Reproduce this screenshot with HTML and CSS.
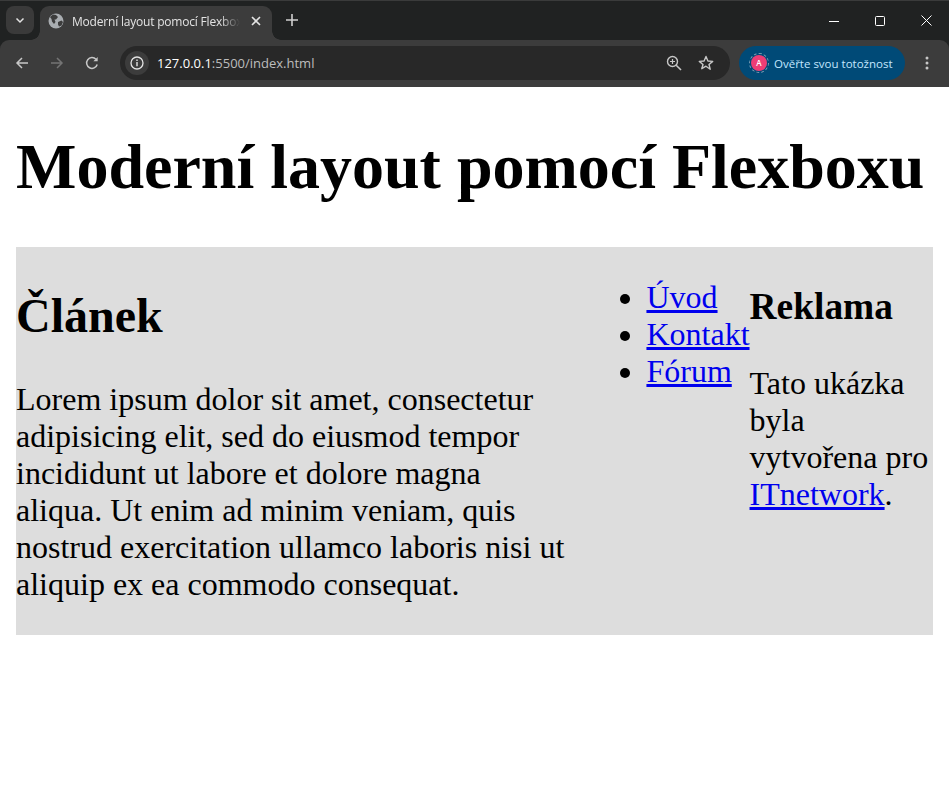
FILE: index.html
```html
<!DOCTYPE html>
<html lang="cs">
<head>
<meta charset="utf-8">
<title>Moderní layout pomocí Flexboxu</title>
<link rel="stylesheet" href="styles.css">
</head>
<body>
<header class="chrome">
  <div class="tabstrip">
    <div class="tab-search">
      <svg class="ico" width="12" height="12" viewBox="0 0 12 12"><path d="M2.500 4.500L6 8l3.500-3.500" fill="none" stroke="#e3e3e3" stroke-width="1.500"/></svg>
    </div>
    <div class="tab">
      <svg class="favicon" width="16" height="16" viewBox="0 0 16 16"><circle cx="8" cy="8" r="7.500" fill="#a9adb1"/><path d="M2 4l3-2.500 3 .5 2 2-2 2.500-1.500 0 1 2.500-1.500 2-2-2.500-.5-2.500zM10 9l3.500-1.500 1.500 1.500-1.500 3.500-2.500 1-1-2z" fill="#3c3c3c"/></svg>
      <span class="tab-title">Moderní layout pomocí Flexboxu</span>
      <svg class="tab-close" width="10" height="10" viewBox="0 0 10 10"><path d="M1 1l8 8M9 1l-8 8" stroke="#e3e3e3" stroke-width="1.600"/></svg>
    </div>
    <svg class="new-tab" width="12" height="12" viewBox="0 0 12 12"><path d="M6 0v12M0 6h12" stroke="#d0d0d0" stroke-width="1.600"/></svg>
    <div class="win-controls">
      <svg width="10" height="10" viewBox="0 0 10 10"><path d="M0 5.500h10" stroke="#fff" stroke-width="1"/></svg>
      <svg width="10" height="10" viewBox="0 0 10 10"><rect x=".5" y=".5" width="9" height="9" rx="1" fill="none" stroke="#fff"/></svg>
      <svg width="11" height="11" viewBox="0 0 11 11"><path d="M.5 .5l10 10M10.500 .5l-10 10" stroke="#fff" stroke-width="1"/></svg>
    </div>
  </div>
  <div class="toolbar">
    <svg class="nav-btn" width="14" height="14" viewBox="0 0 14 14"><path d="M13 7H2M7 2L2 7l5 5" fill="none" stroke="#c7c7c7" stroke-width="1.500"/></svg>
    <svg class="nav-btn" width="14" height="14" viewBox="0 0 14 14"><path d="M1 7h11M7 2l5 5-5 5" fill="none" stroke="#747474" stroke-width="1.500"/></svg>
    <svg class="nav-btn" width="14" height="14" viewBox="0 0 14 14"><path d="M12.200 8.500A5.400 5.400 0 1 1 11 3.300" fill="none" stroke="#c7c7c7" stroke-width="1.500"/><path d="M12.700 1v4.300H8.400z" fill="#c7c7c7"/></svg>
    <div class="omnibox">
      <div class="info-chip">
        <svg width="14" height="14" viewBox="0 0 14 14"><circle cx="7" cy="7" r="6" fill="none" stroke="#e3e3e3" stroke-width="1.300"/><path d="M7 6v4.200M7 3.600v1.300" stroke="#e3e3e3" stroke-width="1.400"/></svg>
      </div>
      <span class="url"><span class="url-host">127.0.0.1</span>:5500/index.html</span>
      <svg class="zoom-ico" width="16" height="16" viewBox="0 0 16 16"><circle cx="6.500" cy="6.500" r="5" fill="none" stroke="#c7c7c7" stroke-width="1.400"/><path d="M10.200 10.200L15 15" stroke="#c7c7c7" stroke-width="1.600"/><path d="M6.500 4v5M4 6.500h5" stroke="#c7c7c7" stroke-width="1.200"/></svg>
      <svg class="star-ico" width="16" height="16" viewBox="0 0 16 16"><path d="M8 1.500l1.900 4.500 4.800.4-3.700 3.100 1.200 4.700L8 11.200l-4.200 2.500L5 9.500 1.300 6.400l4.800-.4z" fill="none" stroke="#c7c7c7" stroke-width="1.400" stroke-linejoin="round"/></svg>
    </div>
    <div class="profile">
      <span class="avatar-ring"><span class="avatar">A</span></span>
      <span class="profile-text">Ověřte svou totožnost</span>
    </div>
    <svg class="menu-ico" width="4" height="14" viewBox="0 0 4 14"><circle cx="2" cy="2" r="1.500" fill="#c7c7c7"/><circle cx="2" cy="7" r="1.500" fill="#c7c7c7"/><circle cx="2" cy="12" r="1.500" fill="#c7c7c7"/></svg>
  </div>
</header>
<main class="page">
  <h1>Moderní layout pomocí Flexboxu</h1>
  <section class="layout">
    <article class="article">
      <h2>Článek</h2>
      <p>Lorem ipsum dolor sit amet, consectetur adipisicing elit, sed do eiusmod tempor incididunt ut labore et dolore magna aliqua. Ut enim ad minim veniam, quis nostrud exercitation ullamco laboris nisi ut aliquip ex ea commodo consequat.</p>
    </article>
    <nav class="menu">
      <ul>
        <li><a href="#">Úvod</a></li>
        <li><a href="#">Kontakt</a></li>
        <li><a href="#">Fórum</a></li>
      </ul>
    </nav>
    <aside class="ad">
      <h3>Reklama</h3>
      <p>Tato ukázka byla vytvořena pro <a href="#">ITnetwork</a>.</p>
    </aside>
  </section>
</main>
</body>
</html>
```
FILE: styles.css
```css
html, body { margin: 0; padding: 0; background: #fff; }
body { overflow: hidden; font-family: "Liberation Serif", serif; font-size: 32px; color: #000; }

.chrome { font-family: "Open Sans", "Noto Sans", sans-serif; background: #202222; }
.tabstrip { height: 40px; display: flex; align-items: flex-start; box-sizing: border-box; border-top: 1px solid #3a3b3b; padding: 5px 0 0 6px; }
.tab-search { width: 28px; height: 28px; border-radius: 8px; background: #3a3a3a; display: flex; align-items: center; justify-content: center; }
.tab { position: relative; margin-left: 6px; width: 232px; height: 34px; box-sizing: border-box; padding: 0 0 4px 8px; background: #3c3c3c; border-radius: 9px 9px 0 0; display: flex; align-items: center; color: #e3e3e3; font-size: 12px; letter-spacing: -.2px; }
.tab::before, .tab::after { content: ""; position: absolute; bottom: 0; width: 9px; height: 9px; }
.tab::before { left: -9px; background: radial-gradient(circle at 0 0, transparent 8.500px, #3c3c3c 9px); }
.tab::after { right: -9px; background: radial-gradient(circle at 100% 0, transparent 8.500px, #3c3c3c 9px); }
.favicon { flex: none; }
.tab-title { margin-left: 8px; width: 168px; flex: none; white-space: nowrap; overflow: hidden; -webkit-mask-image: linear-gradient(90deg, #000 88%, transparent); mask-image: linear-gradient(90deg, #000 88%, transparent); }
.tab-close { margin-left: 11px; flex: none; }
.new-tab { margin: 8px 0 0 14px; flex: none; }
.win-controls { margin-left: auto; display: flex; align-items: center; gap: 36px; padding: 9px 17px 0 0; }

.toolbar { position: relative; height: 47px; box-sizing: border-box; background: #3c3c3c; border-radius: 9px 9px 0 0; display: flex; align-items: center; padding: 0 0 1px 15px; }
.nav-btn { flex: none; margin-right: 21px; }
.nav-btn:nth-of-type(3) { margin-right: 0; }
.omnibox { margin-left: 21px; width: 610px; height: 34px; border-radius: 17px; background: #282828; display: flex; align-items: center; box-sizing: border-box; padding: 0 16px 0 5px; }
.info-chip { width: 24px; height: 24px; border-radius: 50%; background: #3c3c3c; display: flex; align-items: center; justify-content: center; flex: none; }
.url { margin-left: 8px; font-size: 13px; color: #bdbdbd; white-space: nowrap; }
.url-host { color: #fff; }
.zoom-ico { margin-left: auto; flex: none; }
.star-ico { margin-left: 16px; flex: none; }
.profile { margin-left: 9px; width: 166px; height: 34px; border-radius: 17px; background: #004a77; display: flex; align-items: center; box-sizing: border-box; padding-left: 10px; color: #c2e7ff; font-size: 11.500px; flex: none; }
.avatar-ring { width: 20px; height: 20px; border-radius: 50%; border: 1px dashed #7f9fb5; box-sizing: border-box; display: flex; align-items: center; justify-content: center; flex: none; }
.avatar { width: 16px; height: 16px; border-radius: 50%; background: #ee3d75; color: #fff; font-size: 8px; font-weight: 600; text-align: center; line-height: 16px; }
.profile-text { margin-left: 5px; white-space: nowrap; }
.menu-ico { margin-left: 20px; flex: none; }

.page { padding: 0 16px; }
h1 { font-size: 64px; margin: 42.880px 0 43.380px; font-weight: bold; }
.layout { display: flex; background: #ddd; }
.article { flex: 3; min-width: 0; }
.article h2 { font-size: 48px; margin: 40.840px 0 38.160px; font-weight: bold; }
.article p { margin: 32px 0; }
.menu { flex: none; }
.menu ul { margin: 32px 0; padding-left: 80px; }
.ad { flex: 1; min-width: 0; }
.ad h3 { font-size: 37.440px; margin: 37.440px 0; font-weight: bold; }
.ad p { margin: 37.440px 0 32px; }
a { color: #00e; }
```
